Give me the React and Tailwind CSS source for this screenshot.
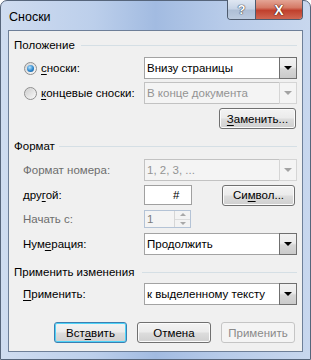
import React from "react";

const font = "font-['Liberation_Sans',Arial,sans-serif]";

const U = ({ children }) => <span className="underline underline-offset-[2px]">{children}</span>;

const Header = ({ children, gap = "ml-[6px]" }) => (
  <div className="flex items-center h-[14px] pl-[5px] pr-[5px]">
    <span className="text-black whitespace-nowrap">{children}</span>
    <div className={`flex-1 h-px bg-[#d5dfe5] ${gap}`} />
  </div>
);

const Arrow = ({ disabled }) =>
  disabled ? (
    <div className="w-[18px] h-[22px] -my-px -mr-px border border-[#d5d5d5] flex items-center justify-center">
      <div className="w-0 h-0 border-l-[4px] border-r-[4px] border-t-[4px] border-l-transparent border-r-transparent border-t-[#a3a3a3]" />
    </div>
  ) : (
    <div className="w-[18px] h-[22px] -my-px -mr-px border border-[#6f6f6f] bg-[linear-gradient(#f2f2f2_0%,#ebebeb_45%,#d6d6d6_55%,#cacaca_100%)] flex items-center justify-center">
      <div className="w-0 h-0 border-l-[4px] border-r-[4px] border-t-[4px] border-l-transparent border-r-transparent border-t-black" />
    </div>
  );

const Select = ({ value, disabled }) => (
  <div
    className={
      disabled
        ? "flex items-center w-[153px] h-[22px] border border-[#c2c2c2] bg-[#f4f4f4]"
        : "flex items-center w-[153px] h-[22px] border border-[#a3a3a3] bg-white"
    }
  >
    <span className={`flex-1 pl-[2px] whitespace-nowrap ${disabled ? "text-[#939393]" : "text-black"}`}>
      {value}
    </span>
    <Arrow disabled={disabled} />
  </div>
);

const Radio = ({ checked }) => (
  <div className="w-[13px] h-[13px] rounded-full border border-[#8f8f8f] bg-[linear-gradient(135deg,#d4d4d4,#fafafa)] flex items-center justify-center">
    {checked ? (
      <div className="w-[7px] h-[7px] rounded-full bg-[radial-gradient(circle_at_40%_35%,#b6e4ff,#2c86cc_55%,#0c4d8e)]" />
    ) : (
      <div className="w-[9px] h-[9px] rounded-full bg-[linear-gradient(135deg,#cfcfcf,#f7f7f7)]" />
    )}
  </div>
);

const Button = ({ children, w, isDefault, disabled }) => {
  let cls =
    "flex items-center justify-center h-[21px] rounded-[3px] border bg-[linear-gradient(#f3f3f3_0%,#ebebeb_48%,#dddddd_52%,#cfcfcf_100%)] shadow-[inset_0_0_0_1px_#fbfbfb] text-black";
  if (isDefault)
    cls =
      "flex items-center justify-center h-[21px] rounded-[3px] border border-[#3c7fb1] bg-[linear-gradient(#f3f3f3_0%,#ebebeb_48%,#dddddd_52%,#cfcfcf_100%)] shadow-[inset_0_0_0_1px_#4ed3f8] text-black";
  else if (disabled)
    cls =
      "flex items-center justify-center h-[21px] rounded-[3px] border border-[#c5c5c5] bg-[#f4f4f4] text-[#8a8a8a]";
  else cls += " border-[#707070]";
  return (
    <div className={cls} style={{ width: w }}>
      {children}
    </div>
  );
};

const Row = ({ left, children, h = "h-[22px]", mt }) => (
  <div className={`flex items-center ${h} ${mt}`}>
    <div className="w-[135px] flex items-center">{left}</div>
    {children}
  </div>
);

export default function App() {
  return (
    <div className={`w-[311px] h-[360px] bg-white ${font} text-[11.5px] leading-[14px]`}>
      <div className="w-[311px] h-[360px] rounded-t-[7px] border border-[#56657b] bg-[linear-gradient(90deg,#cfdcf0_0%,#bccfeb_30%,#a2bbe1_50%,#b7cbe9_72%,#c8d7ee_100%)] flex flex-col">
        {/* title bar */}
        <div className="h-[29px] flex items-start">
          <span className="mt-[8px] ml-[8px] text-[12.5px] leading-[16px] text-black">Сноски</span>
          <div className="ml-auto mr-[7px] -mt-px flex h-[20px] rounded-b-[4px] border border-t-0 border-[#4e5b6e] overflow-hidden">
            <div className="w-[28px] h-full border-r border-[#4e5b6e] bg-[linear-gradient(#dfe7f2_0%,#c7d4e6_45%,#aebfd6_55%,#bccbe0_100%)] flex items-center justify-center text-white font-bold text-[13px] [text-shadow:0_0_1px_#3a4452,0_0_1px_#3a4452,0_0_1px_#3a4452]">
              ?
            </div>
            <div className="w-[46px] h-full bg-[linear-gradient(#e4a595_0%,#d57a66_40%,#c0402d_55%,#d06752_100%)] flex items-center justify-center text-white font-bold text-[14px] [text-shadow:0_0_1px_#4a1a12,0_0_1px_#4a1a12,0_0_1px_#4a1a12]">
              X
            </div>
          </div>
        </div>

        {/* client area */}
        <div className="mx-[7px] h-[322px] border border-[#6e7f98] bg-[#f0f0f0] flex flex-col">
          <div className="mt-[7px]">
            <Header>Положение</Header>
          </div>

          <Row
            mt="mt-[5px]"
            left={
              <div className="flex items-center pl-[15px] gap-[4px]">
                <Radio checked />
                <span>
                  <U>с</U>носки:
                </span>
              </div>
            }
          >
            <Select value="Внизу страницы" />
          </Row>

          <Row
            mt="mt-[3px]"
            left={
              <div className="flex items-center pl-[15px] gap-[4px]">
                <Radio />
                <span>
                  <U>к</U>онцевые сноски:
                </span>
              </div>
            }
          >
            <Select value="В конце документа" disabled />
          </Row>

          <div className="mt-[4px] flex justify-end pr-[6px]">
            <Button w={77}>
              <span>
                <U>З</U>аменить...
              </span>
            </Button>
          </div>

          <div className="mt-[10px]">
            <Header gap="ml-[4px]">Формат</Header>
          </div>

          <Row mt="mt-[6px]" left={<span className="pl-[14px] text-[#6d6d6d]">Формат номера:</span>}>
            <Select value="1, 2, 3, ..." disabled />
          </Row>

          <Row
            mt="mt-[3px]"
            left={
              <span className="pl-[14px]">
                дру<U>г</U>ой:
              </span>
            }
          >
            <div className="w-[48px] h-[20px] border border-[#a0a0a0] bg-white flex items-center pl-[28px]">#</div>
            <div className="ml-auto mr-[7px]">
              <Button w={73}>
                <span>
                  Си<U>м</U>вол...
                </span>
              </Button>
            </div>
          </Row>

          <Row mt="mt-[4px]" h="h-[18px]" left={<span className="pl-[14px] text-[#6d6d6d]">Начать с:</span>}>
            <div className="w-[47px] h-[18px] border border-[#b4c3d6] bg-[#f4f4f4] flex">
              <span className="flex-1 pl-[2px] text-[#7c7c7c] leading-[16px]">1</span>
              <div className="w-[16px] flex flex-col border-l border-[#d6d6d6]">
                <div className="flex-1 border-b border-[#dcdcdc] bg-[#f3f3f3] flex items-center justify-center">
                  <div className="w-0 h-0 border-l-[3px] border-r-[3px] border-b-[3px] border-l-transparent border-r-transparent border-b-[#a8a8a8]" />
                </div>
                <div className="flex-1 bg-[#f3f3f3] flex items-center justify-center">
                  <div className="w-0 h-0 border-l-[3px] border-r-[3px] border-t-[3px] border-l-transparent border-r-transparent border-t-[#a8a8a8]" />
                </div>
              </div>
            </div>
          </Row>

          <Row
            mt="mt-[5px]"
            left={
              <span className="pl-[14px]">
                Нум<U>е</U>рация:
              </span>
            }
          >
            <Select value="Продолжить" />
          </Row>

          <div className="mt-[10px]">
            <Header gap="ml-[8px]">Применить изменения</Header>
          </div>

          <Row
            mt="mt-[4px]"
            left={
              <span className="pl-[14px]">
                <U>П</U>рименить:
              </span>
            }
          >
            <Select value="к выделенному тексту" />
          </Row>

          <div className="mt-[17px] flex justify-end gap-[10px] pr-[7px]">
            <Button w={73} isDefault>
              <span>
                Вст<U>а</U>вить
              </span>
            </Button>
            <Button w={74}>Отмена</Button>
            <Button w={74} disabled>
              Применить
            </Button>
          </div>
        </div>
      </div>
    </div>
  );
}
